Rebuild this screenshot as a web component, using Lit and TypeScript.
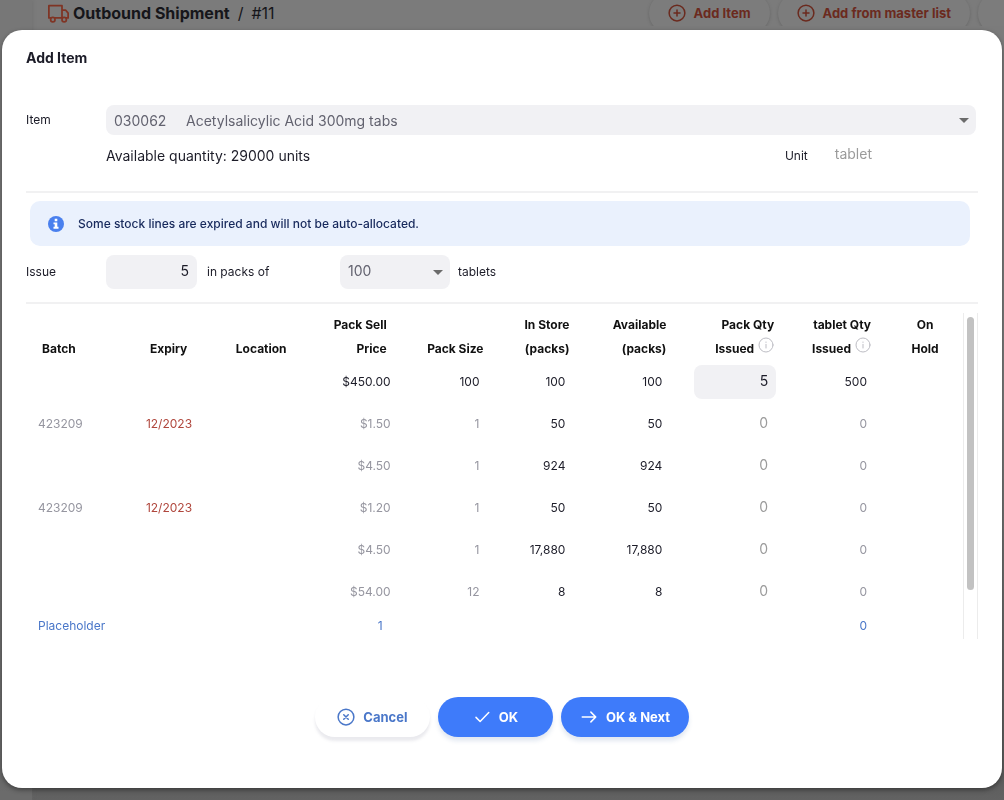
import { LitElement, html, css, svg, nothing } from "lit";
import { customElement, state } from "lit/decorators.js";
import { classMap } from "lit/directives/class-map.js";

interface StockLine {
  batch?: string;
  expiry?: string;
  price: string;
  packSize: string;
  inStore: string;
  available: string;
  issued: number;
  units: number;
  auto?: boolean;
}

const LINES: StockLine[] = [
  { price: "$450.00", packSize: "100", inStore: "100", available: "100", issued: 5, units: 500, auto: true },
  { batch: "423209", expiry: "12/2023", price: "$1.50", packSize: "1", inStore: "50", available: "50", issued: 0, units: 0 },
  { price: "$4.50", packSize: "1", inStore: "924", available: "924", issued: 0, units: 0 },
  { batch: "423209", expiry: "12/2023", price: "$1.20", packSize: "1", inStore: "50", available: "50", issued: 0, units: 0 },
  { price: "$4.50", packSize: "1", inStore: "17,880", available: "17,880", issued: 0, units: 0 },
  { price: "$54.00", packSize: "12", inStore: "8", available: "8", issued: 0, units: 0 },
];

const icon = (name: string, body: unknown) =>
  html`<svg class="icon ${name}" viewBox="0 0 24 24" aria-hidden="true">${body}</svg>`;

const plusCircle = icon("plus", svg`<circle cx="12" cy="12" r="10.500"/><path d="M12 8v8M8 12h8"/>`);
const infoCircle = icon("info", svg`<circle cx="12" cy="12" r="10.5"/><path d="M12 11v5.5M12 7.5v.6"/>`);
const caret = html`<svg class="caret" viewBox="0 0 10 5" aria-hidden="true"><path d="M0 0h10L5 5z"/></svg>`;

@customElement("app-root")
export class AppRoot extends LitElement {
  @state() private packs = 5;

  static styles = css`
    :host {
      display: block;
      min-height: 100vh;
      background: #7a7a7a;
      color: #1c1c28;
      font-family: Inter, "Liberation Sans", sans-serif;
      font-size: 12px;
      line-height: 24px;
    }
    * { box-sizing: border-box; }
    button, input, select { font: inherit; color: inherit; border: 0; margin: 0; }
    .icon {
      fill: none;
      stroke: currentColor;
      stroke-width: 2;
      stroke-linecap: round;
      stroke-linejoin: round;
      flex: none;
    }

    .page {
      display: flex;
      min-height: 100vh;
      background: linear-gradient(#7b7b7b, #7b7b7b 50%, #5c5c5c 97%, #626262);
    }
    .rail { width: 32px; background: #75757588; box-shadow: 1px 0 3px #6666; }
    .bar {
      flex: 1;
      display: flex;
      align-items: center;
      height: 26px;
      padding-left: 16px;
      gap: 8px;
      overflow: hidden;
    }
    .crumbs {
      display: flex;
      align-items: center;
      gap: 8px;
      flex: 1;
      margin: 0;
      color: #16161a;
      font-size: 16px;
      font-weight: 400;
      white-space: nowrap;
    }
    .crumbs .here { display: flex; align-items: center; gap: 4px; font-weight: 700; }
    .truck { width: 21px; height: 21px; color: #7f3424; }
    .tool {
      display: flex;
      align-items: center;
      gap: 8px;
      height: 40px;
      padding: 0 19px;
      border-radius: 20px;
      background: #7c7c7c;
      box-shadow: 0 1px 3px #5558;
      color: #6b2a1e;
      font-size: 13px;
      font-weight: 700;
      white-space: nowrap;
    }
    .plus { width: 18px; height: 18px; }
    .tools { display: flex; gap: 8px; margin-right: -12px; }

    .dialog {
      position: fixed;
      inset: 30px 2px 12px;
      display: flex;
      flex-direction: column;
      padding: 16px 24px 51px;
      border-radius: 20px;
      background: #fff;
      box-shadow: 0 2px 5px #0006;
    }
    .dialog h2 { margin: 0 0 35px; font-size: 14px; line-height: 24px; font-weight: 700; }
    .row { display: flex; align-items: center; }
    .name { width: 80px; flex: none; }
    .pick { position: relative; display: flex; flex: 1; margin-right: 2px; }
    .pick select {
      appearance: none;
      width: 100%;
      height: 30px;
      padding: 2px 30px 0 8px;
      border-radius: 8px;
      background: #f1f1f4;
      color: #62626f;
      font-size: 14px;
    }
    .caret {
      position: absolute;
      right: 7px;
      top: 50%;
      width: 10px;
      height: 5px;
      margin-top: -2px;
      fill: #6b6b6b;
      pointer-events: none;
    }
    .stock { justify-content: space-between; padding: 9px 106px 23px 80px; }
    .stock .amount { font-size: 14px; }
    .unit { display: flex; gap: 27px; }
    .unit .value { font-size: 14px; line-height: 20px; color: #9b9b9b; }
    .rule { height: 2px; margin: 0; border: 0; background: #f1f1f2; flex: none; }
    .alert {
      display: flex;
      align-items: center;
      gap: 14px;
      height: 45px;
      margin: 8px 8px 9px 4px;
      padding: 0 18px;
      border-radius: 10px;
      background: #eaf1fd;
      color: #17295c;
      font-weight: 500;
    }
    .badge { width: 16px; height: 16px; flex: none; }
    .badge circle { fill: #4a80ee; }
    .badge path { fill: #fff; }
    .issue { padding-bottom: 13px; }
    .number {
      height: 34px;
      padding: 0 8px 3px;
      border-radius: 8px;
      background: #f1f1f4;
      font-size: 14px;
      text-align: right;
      appearance: textfield;
    }
    .total { width: 91px; margin-right: 10px; }
    .of { width: 133px; }
    .size { flex: none; width: 110px; margin-right: 8px; }
    .size select { height: 34px; padding-top: 0; padding-bottom: 3px; }

    .lines { display: flex; margin-top: 9px; }
    table { flex: 1; table-layout: fixed; border-collapse: collapse; }
    .w76 { width: 76px; }
    .w86 { width: 86px; }
    .w97 { width: 97px; }
    .w108 { width: 108px; }
    th { height: 48px; padding: 0 16px; vertical-align: bottom; font-weight: 700; text-align: left; color: #111; }
    td { height: 42px; padding: 0 12px; color: #9696a0; }
    .num { text-align: right; }
    td.num { padding-right: 20px; }
    td.price { padding-right: 12px; }
    td.entry { padding: 0 14px 0 12px; }
    th.hold { text-align: center; }
    td.dark, .auto td { color: #1c1c28; }
    td.expiry { color: #b0473d; }
    .entry .number { display: block; width: 100%; }
    .entry .number:disabled { background: none; color: #9b9b9b; }
    .info { width: 16px; height: 16px; margin-left: 4px; color: #bdbdc4; stroke-width: 1.5; vertical-align: 0; }
    .placeholder td { height: 26px; color: #4a77c9; }
    .track {
      width: 15px;
      flex: none;
      padding: 4px 3px;
      border: solid #ececec;
      border-width: 0 1px;
    }
    .thumb { height: 86%; border-radius: 4px; background: #c2c2c2; }

    .actions { display: flex; justify-content: center; gap: 8px; margin-top: auto; }
    .action {
      display: flex;
      align-items: center;
      justify-content: center;
      gap: 8px;
      min-width: 115px;
      height: 40px;
      padding: 0 19px;
      border-radius: 20px;
      background: #3e7bfa;
      color: #fff;
      font-size: 13px;
      font-weight: 700;
      box-shadow: 0 4px 4px #6080b02e;
    }
    .action.plain { background: #fff; color: #4a77c9; box-shadow: 0 4px 3px #60608022; }
    .action .icon { width: 18px; height: 18px; }
  `;

  private head(text: string[], kind = "num", info = false) {
    return html`<th scope="col" class=${kind}>
      ${text.map((t, i) => html`${i ? html`<br />` : nothing}${t}`)}${info ? infoCircle : nothing}
    </th>`;
  }

  private line(l: StockLine, i: number) {
    return html`<tr class=${classMap({ auto: !!l.auto })}>
      <td>${l.batch}</td>
      <td class="expiry">${l.expiry}</td>
      <td></td>
      <td class="num price">${l.price}</td>
      <td class="num">${l.packSize}</td>
      <td class="num dark">${l.inStore}</td>
      <td class="num dark">${l.available}</td>
      <td class="entry">
        <input class="number" type="text" inputmode="numeric" aria-label="Pack quantity issued, line ${i + 1}"
          .value=${String(l.issued)} ?disabled=${!l.auto} />
      </td>
      <td class="num">${l.units}</td>
      <td></td>
    </tr>`;
  }

  render() {
    return html`
      <div class="page">
        <div class="rail"></div>
        <header class="bar">
          <h1 class="crumbs">
            <span class="here">
              ${icon("truck", svg`<path d="M1 3h15v14H1zM16 8h4l3 3.5V17h-7z"/><circle cx="5.5" cy="19" r="2.5" fill="#7b7b7b"/><circle cx="18.5" cy="19" r="2.5" fill="#7b7b7b"/>`)}
              Outbound Shipment
            </span>
            <span>/</span><span>#11</span>
          </h1>
          <div class="tools">
            <button class="tool">${plusCircle}Add Item</button>
            <button class="tool">${plusCircle}Add from master list</button>
            <button class="tool" aria-label="More"></button>
          </div>
        </header>
      </div>

      <section class="dialog" role="dialog" aria-modal="true" aria-labelledby="title">
        <h2 id="title">Add Item</h2>
        <div class="row">
          <label class="name" for="item">Item</label>
          <div class="pick">
            <select id="item"><option>030062\u00a0\u00a0\u00a0\u00a0\u00a0Acetylsalicylic Acid 300mg tabs</option></select>
            ${caret}
          </div>
        </div>
        <div class="row stock">
          <span class="amount">Available quantity: 29000 units</span>
          <span class="unit"><span>Unit</span><span class="value">tablet</span></span>
        </div>
        <hr class="rule" />
        <div class="alert" role="status">
          <svg class="badge" viewBox="0 0 16 16" aria-hidden="true">
            <circle cx="8" cy="8" r="8" />
            <path d="M6.7 2.8h2.6v2.4H6.7zM5.5 6.4h3.8v4.4h1.2v2H5.5v-2h1.2V8.3H5.5z" />
          </svg>
          Some stock lines are expired and will not be auto-allocated.
        </div>
        <div class="row issue">
          <label class="name" for="total">Issue</label>
          <input id="total" class="number total" type="text" inputmode="numeric" .value=${String(this.packs)}
            @input=${(e: Event) => (this.packs = Number((e.target as HTMLInputElement).value) || 0)} />
          <label class="of" for="size">in packs of</label>
          <div class="pick size">
            <select id="size"><option>100</option><option>12</option><option>1</option></select>
            ${caret}
          </div>
          <span>tablets</span>
        </div>
        <hr class="rule" />
        <div class="lines">
          <table>
            <colgroup>
              <col class="w108" /><col class="w86" /><col class="w86" /><col class="w97" /><col class="w97" />
              <col class="w86" /><col class="w97" /><col class="w108" /><col class="w97" /><col class="w76" />
            </colgroup>
            <thead>
              <tr>
                ${this.head(["Batch"], "")}${this.head(["Expiry"], "")}${this.head(["Location"], "")}
                ${this.head(["Pack Sell", "Price"])}${this.head(["Pack Size"])}
                ${this.head(["In Store", "(packs)"])}${this.head(["Available", "(packs)"])}
                ${this.head(["Pack Qty", "Issued"], "num", true)}${this.head(["tablet Qty", "Issued"], "num", true)}
                ${this.head(["On", "Hold"], "hold")}
              </tr>
            </thead>
            <tbody>
              ${LINES.map((l, i) => this.line(l, i))}
              <tr class="placeholder">
                <td>Placeholder</td><td></td><td></td><td class="num">1</td><td></td><td></td><td></td><td></td>
                <td class="num">0</td><td></td>
              </tr>
            </tbody>
          </table>
          <div class="track"><div class="thumb"></div></div>
        </div>
        <div class="actions">
          <button class="action plain">${icon("cancel", svg`<circle cx="12" cy="12" r="10.5"/><path d="M9 9l6 6M15 9l-6 6"/>`)}Cancel</button>
          <button class="action">${icon("ok", svg`<path d="M21 6L9.500 18L4 12.500"/>`)}OK</button>
          <button class="action">${icon("next", svg`<path d="M3 12h18M14.500 5.500L21 12l-6.500 6.500"/>`)}OK &amp; Next</button>
        </div>
      </section>
    `;
  }
}
